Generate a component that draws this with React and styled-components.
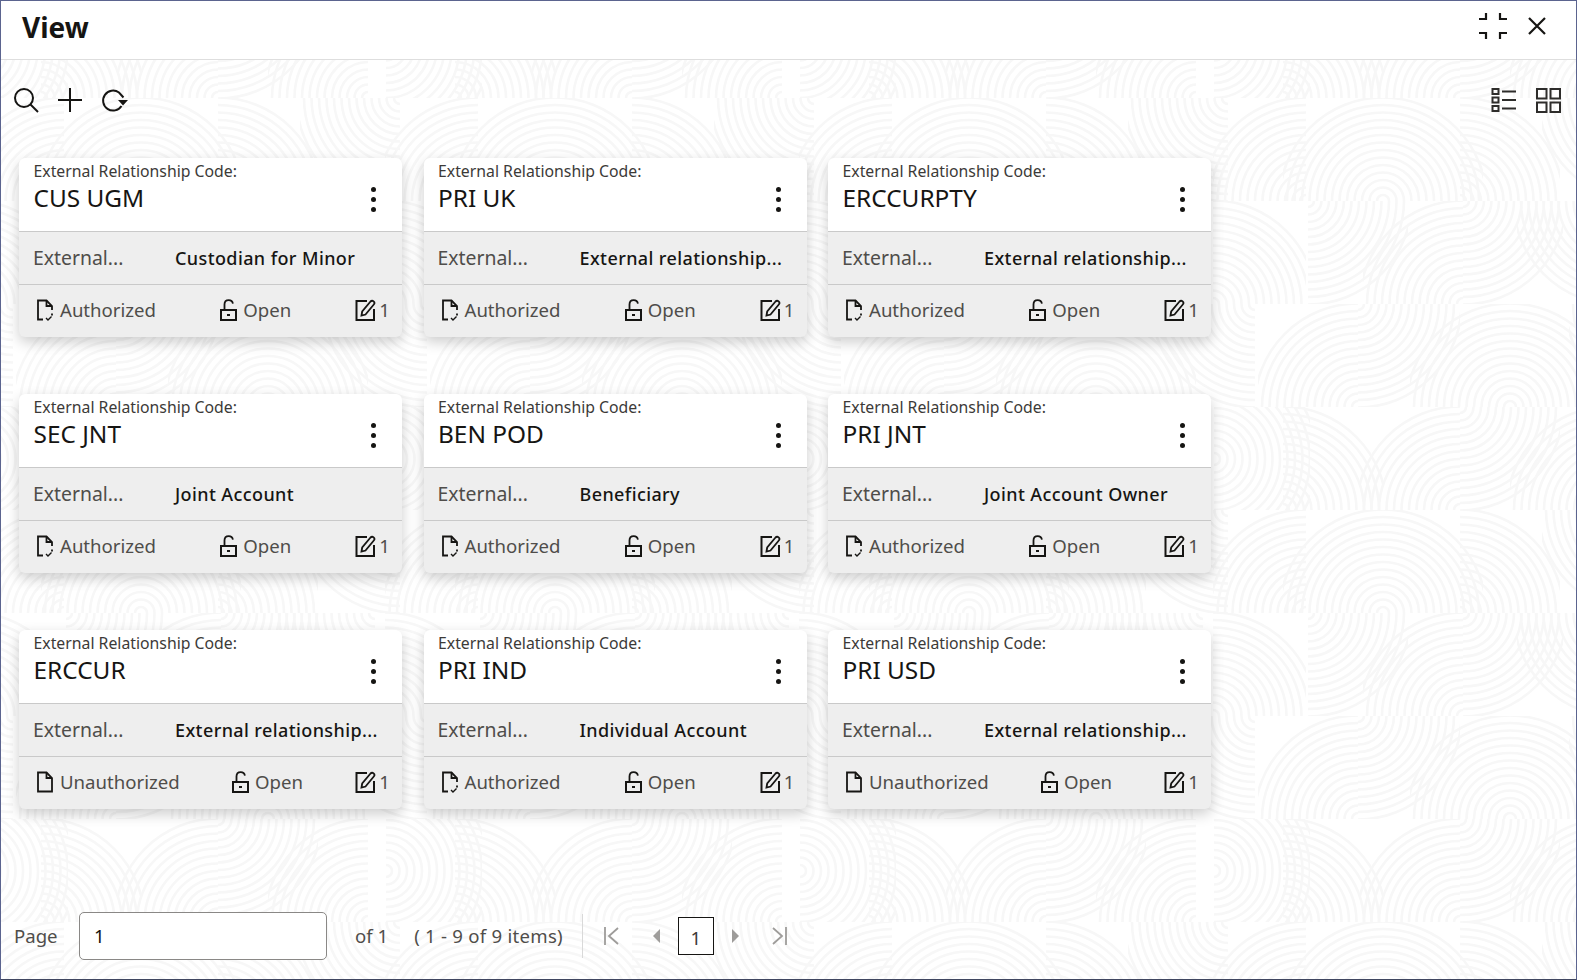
import React from 'react';
import styled, { createGlobalStyle } from 'styled-components';

const GlobalStyle = createGlobalStyle`
    html, body {
        margin: 0;
        padding: 0;
        background: #fff;
    }
    body {
        font-family: "Noto Sans", "Open Sans", Arial, sans-serif;
        color: #161513;
    }
`
const Frame = styled.div`
    box-sizing: border-box;
    width: 1577px;
    height: 980px;
    display: flex;
    flex-direction: column;
    border: 1px solid #5b648f;
    border-bottom-color: #3f4660;
    overflow: hidden;
`
const Header = styled.div`
    box-sizing: border-box;
    height: 59px;
    flex: none;
    display: flex;
    align-items: center;
    justify-content: space-between;
    padding: 0 27px 6px 21px;
    border-bottom: 1px solid #dedede;
    background: #fff;
`
const Title = styled.h1`
    margin: 0;
    font-size: 28px;
    line-height: 36px;
    font-weight: 700;
    color: #161513;
`
const HeaderTools = styled.div`
    display: flex;
    align-items: center;
    gap: 18px;
    margin-bottom: 2px;
`
const Body = styled.div`
    position: relative;
    flex: 1;
    display: flex;
    flex-direction: column;
    min-height: 0;
`
const Backdrop = styled.svg`
    position: absolute;
    left: -1px;
    top: 0;
    width: 1577px;
    height: 920px;
`
const Toolbar = styled.div`
    position: relative;
    height: 98px;
    flex: none;
    box-sizing: border-box;
    display: flex;
    justify-content: space-between;
    padding: 26px 14px 0 11px;
`
const ToolGroup = styled.div`
    display: flex;
    height: 28px;
    gap: ${(p) => p.$gap}px;
`
const ToolIcon = styled.svg`
    display: block;
    width: ${(p) => p.$size || 28}px;
    height: ${(p) => p.$size || 28}px;
    fill: none;
    stroke: ${(p) => p.$stroke || '#161513'};
    stroke-width: 2;
`
const CardGrid = styled.div`
    position: relative;
    display: grid;
    grid-template-columns: repeat(3, 383px);
    column-gap: 21.5px;
    row-gap: 57px;
    padding-left: 18px;
`
const Card = styled.div`
    height: 179px;
    border-radius: 6px;
    background: #eeeeee;
    box-shadow: 0 5px 14px rgba(0, 0, 0, 0.2);
    display: flex;
    flex-direction: column;
`
const CardTop = styled.div`
    box-sizing: border-box;
    height: 74px;
    flex: none;
    display: flex;
    align-items: flex-start;
    justify-content: space-between;
    padding: 3px 26px 0 14.5px;
    background: #fff;
    border-radius: 6px 6px 0 0;
    border-bottom: 1px solid #c9c9c9;
`
const CodeLabel = styled.div`
    font-size: 15.8px;
    line-height: 21px;
    color: #3c3a38;
`
const CodeValue = styled.div`
    font-size: 24.4px;
    line-height: 32px;
    color: #161513;
`
const Kebab = styled.div`
    display: flex;
    flex-direction: column;
    gap: 5px;
    margin-top: 26px;
`
const KebabDot = styled.span`
    display: block;
    width: 5px;
    height: 5px;
    border-radius: 50%;
    background: #161513;
`
const CardMiddle = styled.div`
    box-sizing: border-box;
    height: 53px;
    flex: none;
    display: flex;
    align-items: center;
    padding-left: 14px;
    border-bottom: 1px solid #c9c9c9;
`
const MiddleLabel = styled.div`
    width: 142px;
    flex: none;
    font-size: 19.4px;
    line-height: 26px;
    margin-top: -1px;
    color: #4f4d4a;
`
const MiddleValue = styled.div`
    font-size: 18px;
    font-weight: 500;
    letter-spacing: 0.4px;
    color: #161513;
    white-space: nowrap;
`
const CardFooter = styled.div`
    flex: 1;
    display: flex;
    align-items: center;
    justify-content: space-between;
    padding: 0 12px 2px 17px;
`
const FooterItem = styled.div`
    display: flex;
    align-items: center;
    gap: ${(p) => p.$gap}px;
    font-size: 18.6px;
    line-height: 26px;
    color: #4f4d4a;
`
const FooterIcon = styled.svg`
    display: block;
    width: ${(p) => p.$size}px;
    height: 22px;
    fill: none;
    stroke: #161513;
    stroke-width: 1.8;
`
const Pager = styled.div`
    position: relative;
    margin-top: auto;
    height: 48px;
    margin-bottom: 19px;
    display: flex;
    align-items: center;
    padding-left: 13px;
    font-size: 18.6px;
    line-height: 24px;
    color: #4f4d4a;
`
const PageLabel = styled.span`
    width: 65px;
`
const PageInput = styled.div`
    box-sizing: border-box;
    width: 248px;
    height: 48px;
    display: flex;
    align-items: center;
    padding-left: 14px;
    background: #fff;
    border: 1px solid #8a8886;
    border-radius: 5px;
    color: #161513;
`
const PageOf = styled.span`
    margin-left: 28px;
`
const PageCount = styled.span`
    margin-left: 26px;
    letter-spacing: 0.25px;
`
const PageDivider = styled.span`
    width: 1px;
    height: 44px;
    margin: 0 19px 0 19px;
    background: #d9d9d9;
`
const PageButton = styled.svg`
    display: block;
    width: ${(p) => p.$w}px;
    height: 20px;
    margin-left: ${(p) => p.$ml}px;
    fill: ${(p) => (p.$solid ? '#9e9c9a' : 'none')};
    stroke: #9e9c9a;
    stroke-width: ${(p) => (p.$solid ? 0 : 1.8)};
`
const CurrentPage = styled.div`
    box-sizing: border-box;
    width: 36px;
    height: 38px;
    margin-left: 17px;
    display: flex;
    align-items: center;
    justify-content: center;
    padding-top: 3px;
    border: 1px solid #161513;
    background: #fff;
    color: #3c3a38;
`

// spots of the backdrop tile: [row, clip left, clip width, ring centre x, ring centre y in the row]
const rings = [
    [0, 1128, 100, 1228, 0], [0, 1213, 93, 1306, 103], [0, 1283, 100, 1383, 103], [0, 1383, 100, 1383, 103], [0, 1460, 100, 1460, 103],
    [1, 1213, 93, 1213, 103], [1, 1308, 100, 1308, 0], [1, 1363, 100, 1463, 103], [1, 1463, 100, 1463, 0], [1, 1517, 100, 1617, 0],
    [2, 1155, 100, 1255, 0], [2, 1258, 100, 1358, 103], [2, 1358, 102, 1358, 0], [2, 1410, 100, 1510, 103], [2, 1510, 100, 1510, 103],
    [3, 1214, 96, 1214, 52], [3, 1283, 100, 1283, 103], [3, 1360, 100, 1460, 103], [3, 1460, 100, 1460, 0], [3, 1510, 100, 1610, 103],
];
const radii = [];
for (let r = 6; r <= 104; r += 7.5) radii.push(r);

const RingSpot = ({ spot, index, shift }) => {
    const [row, left, width, cx, cy] = spot;
    const id = `spot-${index}-${shift}`;
    const x = left - 1242 + shift;
    return (
        <g>
            <clipPath id={id}><rect x={x} y={row * 103} width={width} height={103} /></clipPath>
            <g clipPath={`url(#${id})`}>
                {radii.map((r) => <circle key={r} cx={cx - 1242 + shift} cy={row * 103 + cy} r={r} />)}
            </g>
        </g>
    );
};

const Pattern = () => (
    <Backdrop aria-hidden="true">
        <defs>
            <pattern id="tile" x="0" y="38" width="414" height="412" patternUnits="userSpaceOnUse">
                <g fill="none" stroke="#f7f7f7" strokeWidth="2.6">
                    {rings.map((spot, i) => (
                        <React.Fragment key={i}>
                            <RingSpot spot={spot} index={i} shift={0} />
                            <RingSpot spot={spot} index={i} shift={414} />
                        </React.Fragment>
                    ))}
                </g>
            </pattern>
        </defs>
        <rect width="1577" height="920" fill="url(#tile)" />
    </Backdrop>
);

const DocIcon = ({ checked }) => (
    <FooterIcon $size={18} viewBox="0 0 18 22">
        {checked ? (
            <>
                <path d="M7 20.5H2V1.5H10.5L16 7V11" />
                <path d="M10.5 1.5V7H16" />
                <path d="M16 14.5v2" />
                <path d="M10 19l2 2 3.5-3.5" strokeWidth="1.4" />
            </>
        ) : (
            <>
                <path d="M2 20.5V1.5H10.5L16 7V20.5Z" />
                <path d="M10.5 1.5V7H16" />
            </>
        )}
    </FooterIcon>
);

const LockIcon = () => (
    <FooterIcon $size={17} viewBox="0 0 17 22">
        <rect x="1" y="11" width="15" height="10" strokeWidth="2" />
        <path d="M4.500 11V5.500C4.500 3 6.100 1.200 8.700 1.200C11 1.200 12.500 2.600 12.900 4.600" />
        <path d="M7 16h3" strokeWidth="2" />
    </FooterIcon>
);

const EditIcon = () => (
    <FooterIcon $size={21} viewBox="0 0 21 22">
        <path d="M12 2H1.5V21H19V10" strokeWidth="2" />
        <path d="M6.5 16.5L7.2 12.5L15.5 2.5C16.4 1.6 17.6 1.5 18.6 2.4C19.6 3.3 19.6 4.6 18.8 5.5L10.5 15.5Z" />
    </FooterIcon>
);

const RecordCard = ({ code, description, status }) => (
    <Card>
        <CardTop>
            <div>
                <CodeLabel>External Relationship Code:</CodeLabel>
                <CodeValue>{code}</CodeValue>
            </div>
            <Kebab><KebabDot /><KebabDot /><KebabDot /></Kebab>
        </CardTop>
        <CardMiddle>
            <MiddleLabel>External...</MiddleLabel>
            <MiddleValue>{description}</MiddleValue>
        </CardMiddle>
        <CardFooter>
            <FooterItem $gap={6}><DocIcon checked={status === 'Authorized'} />{status}</FooterItem>
            <FooterItem $gap={6}><LockIcon />Open</FooterItem>
            <FooterItem $gap={3}><EditIcon />1</FooterItem>
        </CardFooter>
    </Card>
);

const longDescription = 'External relationship...';
const records = [
    { code: 'CUS UGM', description: 'Custodian for Minor', status: 'Authorized' },
    { code: 'PRI UK', description: longDescription, status: 'Authorized' },
    { code: 'ERCCURPTY', description: longDescription, status: 'Authorized' },
    { code: 'SEC JNT', description: 'Joint Account', status: 'Authorized' },
    { code: 'BEN POD', description: 'Beneficiary', status: 'Authorized' },
    { code: 'PRI JNT', description: 'Joint Account Owner', status: 'Authorized' },
    { code: 'ERCCUR', description: longDescription, status: 'Unauthorized' },
    { code: 'PRI IND', description: 'Individual Account', status: 'Authorized' },
    { code: 'PRI USD', description: longDescription, status: 'Unauthorized' },
];

const App = () => (
    <Frame>
        <GlobalStyle />
        <Header>
            <Title>View</Title>
            <HeaderTools>
                <ToolIcon viewBox="0 0 28 28">
                    <path d="M7 1v6H0M21 1v6H28M7 27v-6H0M21 27v-6H28" strokeWidth="2.200" />
                </ToolIcon>
                <ToolIcon viewBox="0 0 24 24" $size={24}>
                    <path d="M4 4L20 20M20 4L4 20" strokeWidth="2.200" />
                </ToolIcon>
            </HeaderTools>
        </Header>
        <Body>
            <Pattern />
            <Toolbar>
                <ToolGroup $gap={16}>
                    <ToolIcon viewBox="0 0 28 28">
                        <circle cx="12" cy="12" r="9" />
                        <path d="M18.500 18.500L26 26" />
                    </ToolIcon>
                    <ToolIcon viewBox="0 0 28 28">
                        <path d="M14 2V26M2 14H26" />
                    </ToolIcon>
                    <ToolIcon viewBox="0 0 28 28">
                        <path d="M21.500 20A10 10 0 1 1 19 6.500L23.500 11.500" />
                        <path d="M18 14H28L23 19.500Z" fill="#161513" stroke="none" />
                    </ToolIcon>
                </ToolGroup>
                <ToolGroup $gap={16}>
                    <ToolIcon viewBox="0 0 28 28" $stroke="#2e2d2b">
                        <rect x="2.500" y="3" width="6" height="5" />
                        <rect x="2.500" y="11.500" width="6" height="5" />
                        <rect x="2.500" y="20" width="6" height="5" />
                        <path d="M12 5.500H26M12 14H26M12 22.500H26" />
                    </ToolIcon>
                    <ToolIcon viewBox="0 0 28 28" $stroke="#2e2d2b">
                        <rect x="3" y="3" width="9.500" height="9.500" />
                        <rect x="16.500" y="3" width="9.500" height="9.500" />
                        <rect x="3" y="16.500" width="9.500" height="9.500" />
                        <rect x="16.500" y="16.500" width="9.500" height="9.500" />
                    </ToolIcon>
                </ToolGroup>
            </Toolbar>
            <CardGrid>
                {records.map((record) => <RecordCard key={record.code} {...record} />)}
            </CardGrid>
            <Pager>
                <PageLabel>Page</PageLabel>
                <PageInput>1</PageInput>
                <PageOf>of 1</PageOf>
                <PageCount>( 1 - 9 of 9 items)</PageCount>
                <PageDivider />
                <PageButton $w={18} $ml={1} viewBox="0 0 18 20"><path d="M2 1V19M15 2L6 10L15 18" /></PageButton>
                <PageButton $w={9} $ml={31} $solid viewBox="0 0 9 20"><path d="M8 3V17L1 10Z" /></PageButton>
                <CurrentPage>1</CurrentPage>
                <PageButton $w={9} $ml={17} $solid viewBox="0 0 9 20"><path d="M1 3V17L8 10Z" /></PageButton>
                <PageButton $w={18} $ml={30} viewBox="0 0 18 20"><path d="M16 1V19M3 2L12 10L3 18" /></PageButton>
            </Pager>
        </Body>
    </Frame>
);
export default App;
